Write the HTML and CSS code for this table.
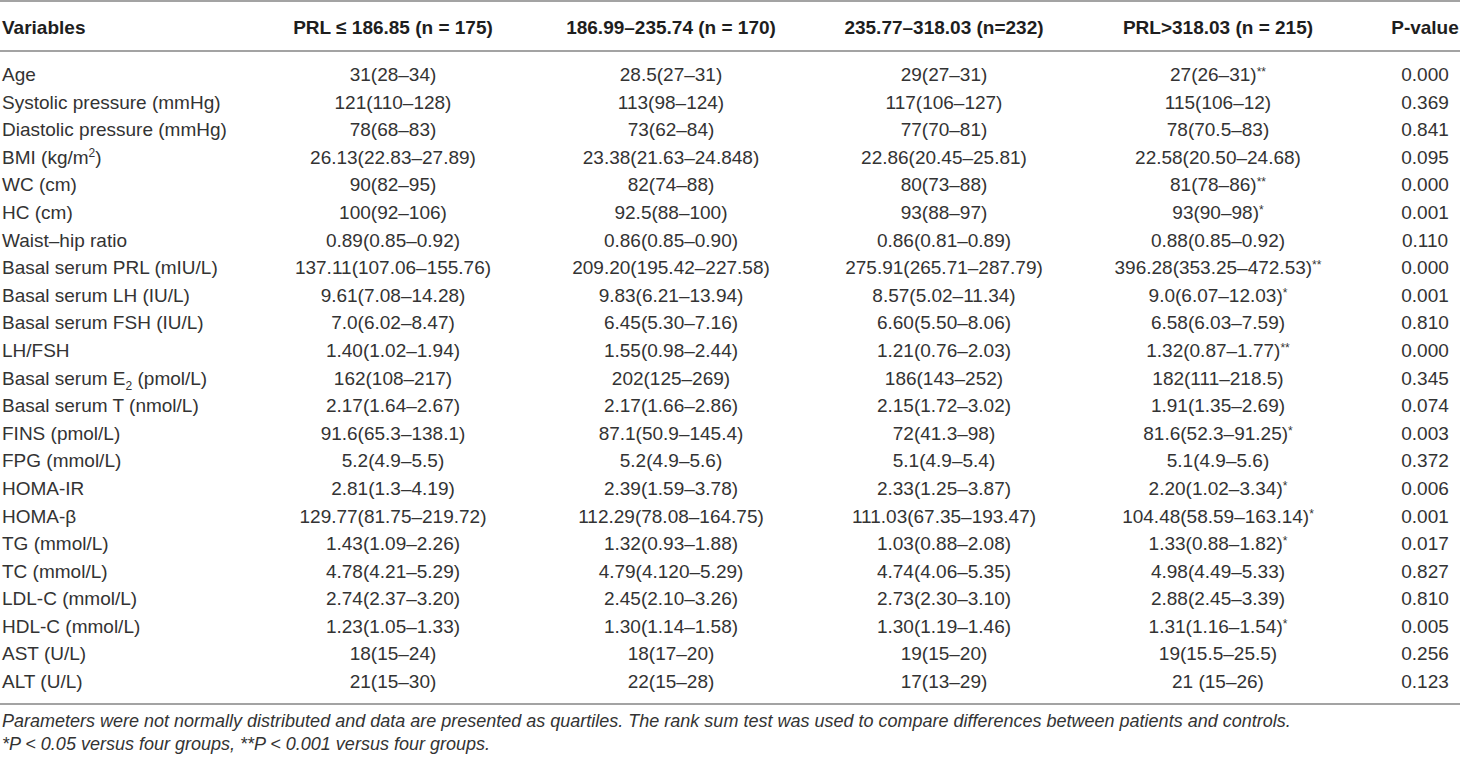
FILE: index.html
```html
<!DOCTYPE html>
<html lang="en">
<head>
  <meta charset="UTF-8" />
  <meta name="viewport" content="width=device-width, initial-scale=1.0" />
  <title>PRL quartiles</title>
  <link rel="stylesheet" href="styles.css">
</head>
<body>
  <table class="data-table">
    <colgroup>
      <col class="col-var">
      <col class="col-q1">
      <col class="col-q2">
      <col class="col-q3">
      <col class="col-q4">
      <col class="col-p">
    </colgroup>
    <thead>
      <tr>
        <th class="var">Variables</th>
        <th>PRL ≤ 186.85 (n = 175)</th>
        <th>186.99–235.74 (n = 170)</th>
        <th>235.77–318.03 (n=232)</th>
        <th>PRL&gt;318.03 (n = 215)</th>
        <th class="pval">P-value</th>
      </tr>
    </thead>
    <tbody>
      <tr><td class="var">Age</td><td>31(28–34)</td><td>28.5(27–31)</td><td>29(27–31)</td><td>27(26–31)<span class="ast">**</span></td><td class="pval">0.000</td></tr>
      <tr><td class="var">Systolic pressure (mmHg)</td><td>121(110–128)</td><td>113(98–124)</td><td>117(106–127)</td><td>115(106–12)</td><td class="pval">0.369</td></tr>
      <tr><td class="var">Diastolic pressure (mmHg)</td><td>78(68–83)</td><td>73(62–84)</td><td>77(70–81)</td><td>78(70.5–83)</td><td class="pval">0.841</td></tr>
      <tr><td class="var">BMI (kg/m<sup>2</sup>)</td><td>26.13(22.83–27.89)</td><td>23.38(21.63–24.848)</td><td>22.86(20.45–25.81)</td><td>22.58(20.50–24.68)</td><td class="pval">0.095</td></tr>
      <tr><td class="var">WC (cm)</td><td>90(82–95)</td><td>82(74–88)</td><td>80(73–88)</td><td>81(78–86)<span class="ast">**</span></td><td class="pval">0.000</td></tr>
      <tr><td class="var">HC (cm)</td><td>100(92–106)</td><td>92.5(88–100)</td><td>93(88–97)</td><td>93(90–98)<span class="ast">*</span></td><td class="pval">0.001</td></tr>
      <tr><td class="var">Waist–hip ratio</td><td>0.89(0.85–0.92)</td><td>0.86(0.85–0.90)</td><td>0.86(0.81–0.89)</td><td>0.88(0.85–0.92)</td><td class="pval">0.110</td></tr>
      <tr><td class="var">Basal serum PRL (mIU/L)</td><td>137.11(107.06–155.76)</td><td>209.20(195.42–227.58)</td><td>275.91(265.71–287.79)</td><td>396.28(353.25–472.53)<span class="ast">**</span></td><td class="pval">0.000</td></tr>
      <tr><td class="var">Basal serum LH (IU/L)</td><td>9.61(7.08–14.28)</td><td>9.83(6.21–13.94)</td><td>8.57(5.02–11.34)</td><td>9.0(6.07–12.03)<span class="ast">*</span></td><td class="pval">0.001</td></tr>
      <tr><td class="var">Basal serum FSH (IU/L)</td><td>7.0(6.02–8.47)</td><td>6.45(5.30–7.16)</td><td>6.60(5.50–8.06)</td><td>6.58(6.03–7.59)</td><td class="pval">0.810</td></tr>
      <tr><td class="var">LH/FSH</td><td>1.40(1.02–1.94)</td><td>1.55(0.98–2.44)</td><td>1.21(0.76–2.03)</td><td>1.32(0.87–1.77)<span class="ast">**</span></td><td class="pval">0.000</td></tr>
      <tr><td class="var">Basal serum E<sub>2</sub> (pmol/L)</td><td>162(108–217)</td><td>202(125–269)</td><td>186(143–252)</td><td>182(111–218.5)</td><td class="pval">0.345</td></tr>
      <tr><td class="var">Basal serum T (nmol/L)</td><td>2.17(1.64–2.67)</td><td>2.17(1.66–2.86)</td><td>2.15(1.72–3.02)</td><td>1.91(1.35–2.69)</td><td class="pval">0.074</td></tr>
      <tr><td class="var">FINS (pmol/L)</td><td>91.6(65.3–138.1)</td><td>87.1(50.9–145.4)</td><td>72(41.3–98)</td><td>81.6(52.3–91.25)<span class="ast">*</span></td><td class="pval">0.003</td></tr>
      <tr><td class="var">FPG (mmol/L)</td><td>5.2(4.9–5.5)</td><td>5.2(4.9–5.6)</td><td>5.1(4.9–5.4)</td><td>5.1(4.9–5.6)</td><td class="pval">0.372</td></tr>
      <tr><td class="var">HOMA-IR</td><td>2.81(1.3–4.19)</td><td>2.39(1.59–3.78)</td><td>2.33(1.25–3.87)</td><td>2.20(1.02–3.34)<span class="ast">*</span></td><td class="pval">0.006</td></tr>
      <tr><td class="var">HOMA-β</td><td>129.77(81.75–219.72)</td><td>112.29(78.08–164.75)</td><td>111.03(67.35–193.47)</td><td>104.48(58.59–163.14)<span class="ast">*</span></td><td class="pval">0.001</td></tr>
      <tr><td class="var">TG (mmol/L)</td><td>1.43(1.09–2.26)</td><td>1.32(0.93–1.88)</td><td>1.03(0.88–2.08)</td><td>1.33(0.88–1.82)<span class="ast">*</span></td><td class="pval">0.017</td></tr>
      <tr><td class="var">TC (mmol/L)</td><td>4.78(4.21–5.29)</td><td>4.79(4.120–5.29)</td><td>4.74(4.06–5.35)</td><td>4.98(4.49–5.33)</td><td class="pval">0.827</td></tr>
      <tr><td class="var">LDL-C (mmol/L)</td><td>2.74(2.37–3.20)</td><td>2.45(2.10–3.26)</td><td>2.73(2.30–3.10)</td><td>2.88(2.45–3.39)</td><td class="pval">0.810</td></tr>
      <tr><td class="var">HDL-C (mmol/L)</td><td>1.23(1.05–1.33)</td><td>1.30(1.14–1.58)</td><td>1.30(1.19–1.46)</td><td>1.31(1.16–1.54)<span class="ast">*</span></td><td class="pval">0.005</td></tr>
      <tr><td class="var">AST (U/L)</td><td>18(15–24)</td><td>18(17–20)</td><td>19(15–20)</td><td>19(15.5–25.5)</td><td class="pval">0.256</td></tr>
      <tr><td class="var">ALT (U/L)</td><td>21(15–30)</td><td>22(15–28)</td><td>17(13–29)</td><td>21 (15–26)</td><td class="pval">0.123</td></tr>
    </tbody>
  </table>

  <div class="notes">
    <p>Parameters were not normally distributed and data are presented as quartiles. The rank sum test was used to compare differences between patients and controls.</p>
    <p>*P &lt; 0.05 versus four groups, **P &lt; 0.001 versus four groups.</p>
  </div>
</body>
</html>
```

FILE: styles.css
```css
body { margin: 0; background: #fff; color: #333; font-family: "Liberation Sans", Arial, sans-serif; }
.data-table { width: 1460px; border-collapse: collapse; table-layout: fixed; font-size: 19px; border-top: 2px solid #a3a3a3; border-bottom: 2px solid #a3a3a3; }
.col-var { width: 260px; }
.col-q1 { width: 266px; }
.col-q2 { width: 290px; }
.col-q3 { width: 256px; }
.col-q4 { width: 292px; }
.col-p { width: 96px; }
th { height: 45px; padding: 3px 0 0; font-weight: bold; color: #1e1e1e; text-align: center; white-space: nowrap; border-bottom: 2px solid #a3a3a3; }
td { padding: 0; line-height: 27.6px; text-align: center; white-space: nowrap; }
th.var, td.var { text-align: left; padding-left: 2px; }
th.pval, td.pval { padding-left: 26px; }
tbody tr:first-child td { padding-top: 9px; }
tbody tr:last-child td { padding-bottom: 7px; }
sup, sub { font-size: 12px; line-height: 0; }
.ast { font-size: 12px; vertical-align: 5px; line-height: 0; }
.notes { padding: 5px 0 0 2px; font-style: italic; font-size: 18px; color: #333; }
.notes p { margin: 0; line-height: 23px; }
```
